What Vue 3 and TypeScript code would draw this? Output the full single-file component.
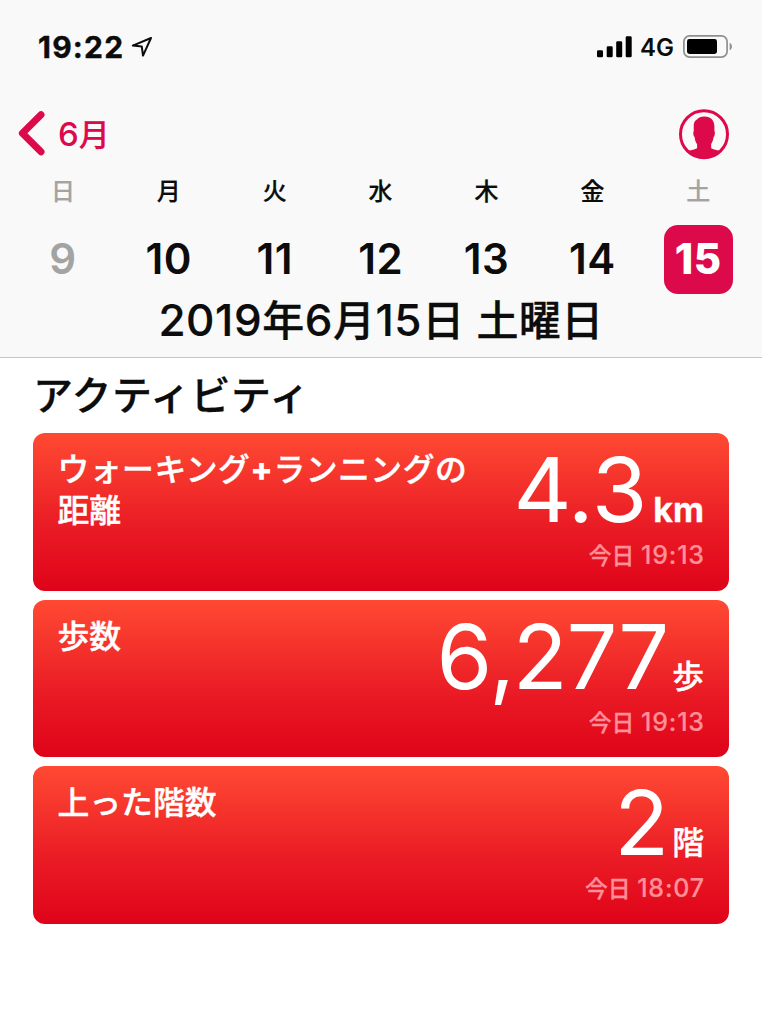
<script setup lang="ts">
interface Day {
  name: string
  date: number
  weekend?: boolean
  selected?: boolean
}

interface Metric {
  id: string
  title: string[]
  value: string
  unit: string
  time: string
}

interface Run {
  text: string
  latin: boolean
}

const days: Day[] = [
  { name: '日', date: 9, weekend: true },
  { name: '月', date: 10 },
  { name: '火', date: 11 },
  { name: '水', date: 12 },
  { name: '木', date: 13 },
  { name: '金', date: 14 },
  { name: '土', date: 15, weekend: true, selected: true },
]

const metrics: Metric[] = [
  { id: 'distance', title: ['ウォーキング+ランニングの', '距離'], value: '4.3', unit: 'km', time: '19:13' },
  { id: 'steps', title: ['歩数'], value: '6,277', unit: '歩', time: '19:13' },
  { id: 'floors', title: ['上った階数'], value: '2', unit: '階', time: '18:07' },
]

// Splits mixed text so that digits and kanji can be sized separately.
function runs(text: string): Run[] {
  return (text.match(/[\x21-\x7e]+|[^\x21-\x7e]+/g) ?? []).map((part) => ({
    text: part,
    latin: /^[\x21-\x7e]/.test(part),
  }))
}
</script>

<template>
  <div class="screen">
    <header class="top">
      <div class="status">
        <div class="clock">
          <span class="time">19:22</span>
          <svg class="location" width="22" height="22" viewBox="0 0 22 22">
            <path d="M20 2 L1.8 9.6 L10.8 10.6 L12 19.6 Z" />
          </svg>
        </div>
        <div class="indicators">
          <svg width="36" height="22" viewBox="0 0 36 22">
            <rect x="0" y="14.3" width="6" height="7" rx="1.3" />
            <rect x="9.7" y="10.3" width="6" height="11" rx="1.3" />
            <rect x="19.2" y="5.3" width="6" height="16" rx="1.3" />
            <rect x="28.7" y="0.3" width="6" height="21" rx="1.3" />
          </svg>
          <span class="network">4G</span>
          <svg class="battery" width="50" height="23" viewBox="0 0 50 23">
            <rect class="shell" x="0.9" y="0.9" width="43.2" height="21.2" rx="5.6" />
            <rect x="4" y="4" width="30" height="15" rx="2.4" />
            <path class="cap" d="M46.6 7.7 C49.7 9 49.7 14 46.6 15.3 Z" />
          </svg>
        </div>
      </div>

      <nav class="nav">
        <a class="back">
          <svg width="27" height="45" viewBox="0 0 27 45">
            <path d="M23 3.8 L4.4 22.3 L23 40.8" />
          </svg>
          <span class="month"><span class="latin">6</span>月</span>
        </a>
        <svg class="profile" width="51" height="51" viewBox="0 0 51 51">
          <circle cx="25" cy="25.3" r="23.5" />
          <path
            d="M25 7.5 C31.7 7.3 35.4 11.5 35.4 17.5 L35.4 22 C36.3 23 35.9 27 34.6 28 C34.2 31.5 33.1 33.5 32.1 35.2 L32.2 39.2 C35.2 41 39 41.2 41.5 42 C37.7 46.5 31.7 49 25 49 C18.3 49 12.3 46.5 8.5 42 C11 41.2 15.3 41 18.1 39.2 L18.1 35.2 C16.7 33.5 16 31.5 15.6 28 C14.3 27 13.9 23 14.8 22 L14.7 16.5 C14.7 13.2 16.5 11.5 17.9 10.6 C19.4 8.6 22 7.5 25 7.5 Z"
          />
        </svg>
      </nav>

      <div class="week">
        <div
          v-for="day in days"
          :key="day.date"
          class="day"
          :class="{ weekend: day.weekend, selected: day.selected }"
        >
          <span class="name">{{ day.name }}</span>
          <span class="date">{{ day.date }}</span>
        </div>
      </div>

      <h1 class="full-date">
        <span v-for="(run, i) in runs('2019年6月15日 土曜日')" :key="i" :class="{ latin: run.latin }">{{ run.text }}</span>
      </h1>
    </header>

    <main class="content">
      <h2 class="section">アクティビティ</h2>
      <div class="cards">
        <article v-for="metric in metrics" :key="metric.id" class="card">
          <h3 class="title">
            <span v-for="line in metric.title" :key="line" class="line" :class="{ mixed: line.includes('+') }"
              ><span v-for="(run, i) in runs(line)" :key="i" :class="{ latin: run.latin }">{{ run.text }}</span></span
            >
          </h3>
          <div class="reading">
            <div class="amount">
              <span class="value"
                ><span v-for="(char, i) in metric.value" :key="i" :class="{ comma: char === ',', point: char === '.' }">{{
                  char
                }}</span></span
              >
              <span class="unit" :class="{ latin: metric.unit === 'km' }">{{ metric.unit }}</span>
            </div>
            <div class="when">今日 <span class="latin">{{ metric.time }}</span></div>
          </div>
        </article>
      </div>
    </main>
  </div>
</template>

<style>
html,
body {
  background: #ffffff;
  overflow: hidden;
}
</style>

<style scoped>
.screen {
  box-sizing: border-box;
  width: 762px;
  height: 1024px;
  overflow: hidden;
  background: #ffffff;
  color: #0c0c0c;
  font-family: 'Noto Sans CJK JP', sans-serif;
  font-weight: 500;
}

.latin,
.time,
.network,
.date,
.value {
  font-family: Inter, 'Noto Sans CJK JP', sans-serif;
  -webkit-text-stroke: 0;
}

h1,
h2,
h3 {
  margin: 0;
}

.top {
  box-sizing: border-box;
  height: 358px;
  background: #f9f9f9;
  border-bottom: 1px solid #c6c6c6;
}

.status {
  display: flex;
  justify-content: space-between;
  height: 93px;
  padding: 0 29px 0 38px;
}

.clock,
.indicators {
  display: flex;
  align-items: center;
}

.time {
  font-size: 30px;
  font-weight: 700;
  line-height: 40px;
  letter-spacing: 1.2px;
  -webkit-text-stroke: 0.4px currentColor;
}

.location {
  margin: 0 0 0 7px;
  fill: none;
  stroke: #0c0c0c;
  stroke-width: 2;
  stroke-linejoin: round;
}

.network {
  margin: 2px 0 0 7px;
  font-size: 24px;
  font-weight: 600;
  line-height: 30px;
}

.battery {
  margin-left: 9px;
}

.battery .shell {
  fill: none;
  stroke: #8f8f8f;
  stroke-width: 1.7;
}

.battery .cap {
  fill: #8f8f8f;
}

.nav {
  display: flex;
  align-items: center;
  justify-content: space-between;
  height: 80px;
  padding: 0 32px 0 18px;
  color: #dc0a4b;
}

.back {
  display: flex;
  align-items: center;
}

.back svg {
  fill: none;
  stroke: currentColor;
  stroke-width: 7;
  stroke-linecap: round;
  stroke-linejoin: round;
}

.month {
  margin: 0 0 0 13px;
  font-size: 31px;
  line-height: 40px;
  -webkit-text-stroke: 0.2px currentColor;
}

.month .latin {
  font-size: 33px;
}

.profile {
  margin-top: 2px;
}

.profile circle {
  fill: none;
  stroke: currentColor;
  stroke-width: 3;
}

.profile path {
  fill: currentColor;
}

.week {
  display: grid;
  grid-template-columns: repeat(7, 105.9px);
  padding-left: 10px;
}

.day {
  display: flex;
  flex-direction: column;
  align-items: center;
}

.name {
  height: 52px;
  font-size: 24px;
  line-height: 34px;
  -webkit-text-stroke: 0.2px currentColor;
}

.date {
  width: 69px;
  height: 69px;
  border-radius: 14px;
  font-size: 42px;
  font-weight: 600;
  line-height: 68px;
  letter-spacing: 0.5px;
  text-align: center;
}

.weekend {
  color: #a3a3a3;
}

.selected .date {
  background: #dc0a4b;
  color: #ffffff;
  font-weight: 800;
}

.full-date {
  height: 60px;
  font-size: 42px;
  font-weight: 500;
  line-height: 48px;
  letter-spacing: 0.4px;
  text-align: center;
  white-space: pre;
  word-spacing: 2px;
  -webkit-text-stroke: 0.3px currentColor;
}

.full-date .latin {
  font-weight: 500;
  font-size: 44px;
  letter-spacing: 0.6px;
  -webkit-text-stroke: 0.2px currentColor;
}

.content {
  padding: 0 33px;
}

.section {
  height: 75px;
  font-size: 40px;
  font-weight: 500;
  line-height: 71px;
  letter-spacing: 0.5px;
  -webkit-text-stroke: 0.3px currentColor;
}

.cards {
  display: flex;
  flex-direction: column;
  gap: 9px;
}

.card {
  box-sizing: border-box;
  display: flex;
  justify-content: space-between;
  height: 157.6px;
  padding: 15px 25px 0;
  border-radius: 12px;
  background: linear-gradient(#ff4a33, #ea1c25 58%, #df0319);
  color: #ffffff;
}

.title {
  margin: -2px 0 0 -0.5px;
  font-size: 31.8px;
  font-weight: 500;
  line-height: 42px;
  -webkit-text-stroke: 0.4px currentColor;
}

.line {
  display: block;
  height: 41px;
  white-space: nowrap;
}

.line.mixed {
  letter-spacing: 0.5px;
}

.title .latin {
  font-weight: 800;
  font-size: 33px;
  line-height: 30px;
}

.reading {
  text-align: right;
  white-space: nowrap;
}

.amount {
  display: flex;
  align-items: baseline;
  justify-content: flex-end;
  height: 89px;
}

.value {
  font-size: 90px;
  font-weight: 400;
  line-height: 84px;
  letter-spacing: -1px;
}

.comma {
  margin: 0 -1.5px 0 -2px;
}

.value .point {
  margin: 0 -1px 0 0;
}

.unit {
  position: relative;
  top: -1px;
  margin-left: 4px;
  font-size: 31.8px;
  line-height: 40px;
  -webkit-text-stroke: 0.4px currentColor;
}

.unit.latin {
  top: 0;
  margin-left: 7px;
  font-size: 34px;
  font-weight: 700;
  -webkit-text-stroke: 0.3px currentColor;
}

.when {
  font-size: 22.8px;
  line-height: 36px;
  word-spacing: 1.5px;
  color: #ff8f98;
  -webkit-text-stroke: 0.3px currentColor;
}

.when .latin {
  font-size: 25px;
  letter-spacing: 0.8px;
  margin-right: -0.8px;
  -webkit-text-stroke: 0.2px currentColor;
}
</style>
